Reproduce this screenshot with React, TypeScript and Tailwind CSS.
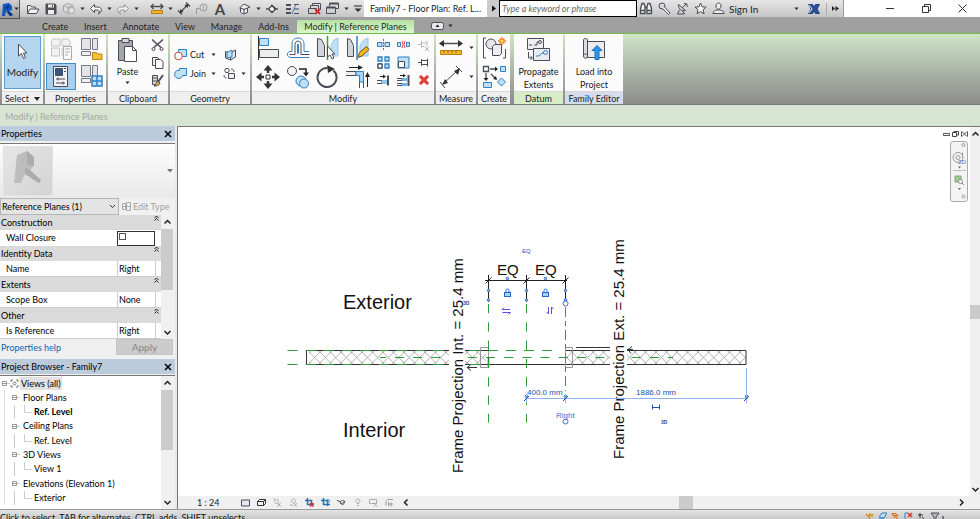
import React from "react";

type Kids = { children?: React.ReactNode };

function Svg({ w, h, children }: Kids & { w: number; h: number }) {
  return (
    <svg width={w} height={h} viewBox={`0 0 ${w} ${h}`} fill="none" stroke="#4a4d57" strokeWidth="1" className="shrink-0" aria-hidden="true">
      {children}
    </svg>
  );
}

function Caret() {
  return (
    <Svg w={5} h={4}>
      <path d="M0.5 0.5h4L2.5 3z" fill="#222" stroke="none" />
    </Svg>
  );
}

function Chevron({ dir }: { dir: "up" | "down" | "left" | "right" }) {
  const d = {
    up: "M1.5 5.5L4.5 2.5l3 3",
    down: "M1.5 3L4.5 6l3-3",
    left: "M5.5 1.5L2.5 4.5l3 3",
    right: "M3 1.5l3 3-3 3",
  }[dir];
  return (
    <Svg w={9} h={9}>
      <path d={d} stroke="#222" strokeWidth="1.5" />
    </Svg>
  );
}

function Cell({ label, children }: Kids & { label: string }) {
  return (
    <button aria-label={label} className="flex h-4 w-[18px] shrink-0 items-center justify-center">
      {children}
    </button>
  );
}

function ArrowCell({ label }: { label: string }) {
  return (
    <button aria-label={label} className="flex h-4 w-[9px] shrink-0 items-center justify-center">
      <Caret />
    </button>
  );
}

function QuickAccess() {
  return (
    <div className="flex h-[17px] shrink-0 items-center pl-1">
      <Cell label="Open">
        <Svg w={14} h={12}>
          <path d="M1.5 10.5v-8h3l1 1.500h4v2M1.500 10.500l2.500-4.500h9l-2.500 4.500z" fill="#f3f3f3" />
        </Svg>
      </Cell>
      <Cell label="Save">
        <Svg w={12} h={12}>
          <path d="M1 1h9l1 1v9H1z" fill="#4a4d57" />
          <path d="M3 1.500h6v3H3zM3 7h6v4H3z" fill="#eee" stroke="none" />
          <path d="M7.500 2v2" />
        </Svg>
      </Cell>
      <Cell label="Synchronize">
        <Svg w={14} h={13}>
          <path d="M1.500 3.500L6 1.500l5 2v5l-5 3-4.500-2.500zM1.500 3.500L6 5.500l5-2M6 5.500v6" stroke="#a5a5a5" fill="#ddd" />
          <circle cx="9.500" cy="8.500" r="3" stroke="#a5a5a5" fill="#e3e3e3" />
        </Svg>
      </Cell>
      <ArrowCell label="Synchronize options" />
      <Cell label="Undo">
        <Svg w={14} h={12}>
          <path d="M1.500 5.500l4-4v2.500h3c5 0 5 5 1 7 1.500-2.500 1-4-1-4h-3v2.500z" fill="#fafafa" />
        </Svg>
      </Cell>
      <ArrowCell label="Undo list" />
      <Cell label="Redo">
        <Svg w={14} h={12}>
          <path d="M12.500 5.500l-4-4v2.500h-3c-5 0-5 5-1 7-1.500-2.500-1-4 1-4h3v2.500z" fill="#eee" stroke="#999" />
        </Svg>
      </Cell>
      <ArrowCell label="Redo list" />
      <div className="w-[7px]" />
      <Cell label="Measure between references">
        <Svg w={14} h={12}>
          <path d="M1 3.500h12M3.500 1L1 3.500 3.500 6M10.500 1L13 3.500 10.500 6" strokeWidth="1.300" />
          <path d="M1.500 7.500h11v3h-11z" fill="#eeb52b" stroke="#b77f10" />
        </Svg>
      </Cell>
      <ArrowCell label="Measure options" />
      <Cell label="Aligned dimension">
        <Svg w={14} h={13}>
          <path d="M3 10.500l8-8M1 8.500l4 4M9 .5l4 4" strokeWidth="1.200" />
          <path d="M2.500 11l1-4 3 3zM11.500 2l-1 4-3-3z" fill="#333" stroke="none" />
        </Svg>
      </Cell>
      <Cell label="Tag by category">
        <Svg w={14} h={12}>
          <path d="M1.500 11V5.500H5" stroke="#999" />
          <circle cx="8.500" cy="4.500" r="3.500" stroke="#999" />
          <path d="M8.500 2.500v4" stroke="#999" />
        </Svg>
      </Cell>
      <Cell label="Text">
        <span className="text-[15px] leading-4 font-bold text-[#444]">A</span>
      </Cell>
      <div className="w-[7px]" />
      <Cell label="Default 3D view">
        <Svg w={14} h={13}>
          <path d="M1.500 6L6 2l6 3-2.500 1v4.500L5 12l-2.500-2V6zM2.500 6L6 7.500l3.500-1.500M6 7.500V12" fill="#eee" />
        </Svg>
      </Cell>
      <ArrowCell label="3D view options" />
      <Cell label="Section">
        <Svg w={12} h={12}>
          <path d="M0 6h2.500M9.500 6H12M2.500 6L6 2.500 9.500 6 6 9.500z" strokeWidth="1.500" fill="#fff" />
          <path d="M5 1l6 5H8z" fill="#444" stroke="none" />
        </Svg>
      </Cell>
      <div className="w-[2px]" />
      <Cell label="Thin lines">
        <Svg w={13} h={12}>
          <path d="M0 2h5M0 6h5M0 10h5" strokeWidth="2" />
          <path d="M6 11l4-10" stroke="#3d8cd0" />
          <path d="M8 1.500h5M8 6h5M8 10.500h5" />
        </Svg>
      </Cell>
      <div className="w-[5px]" />
      <Cell label="Close hidden windows">
        <Svg w={14} h={13}>
          <path d="M4.500 3.500v-2h8v6h-2M2.500 6V3.500h8V8M.5 6.500h8v5h-8z" />
          <path d="M7 7l5 5M12 7l-5 5" stroke="#d52b2b" strokeWidth="1.800" />
        </Svg>
      </Cell>
      <Cell label="Switch windows">
        <Svg w={14} h={13}>
          <path d="M3.500 4.500v-3h9v5h-3M.5 5.500h9v6h-9z" />
          <path d="M.5 5.500h9M3.500 1.500h9" strokeWidth="2" />
        </Svg>
      </Cell>
      <ArrowCell label="Window list" />
      <button aria-label="Customize toolbar" className="flex h-4 w-[13px] items-center justify-center">
        <Svg w={8} h={8}>
          <path d="M0 1h8" stroke="#222" />
          <path d="M0.500 3.500h7L4 7z" fill="#333" stroke="none" />
        </Svg>
      </button>
    </div>
  );
}

function TitleBar() {
  return (
    <header className="relative z-10 flex h-[17px] shrink-0 items-start bg-linear-to-b from-[#e6e6e6] to-[#c6c6c6]">
      <button aria-label="Application menu" className="flex h-[19px] w-5 shrink-0 items-center border-r border-b border-[#555] bg-linear-to-b from-[#d0d0d0] to-[#999] pl-px">
        <Svg w={13} h={15}>
          <path d="M2 2l6-1 3 3v4L8 9l4 4-3 1-4-5-1 5H1z" fill="#1257c0" stroke="none" />
          <path d="M5 4l3-1v3L5 7zM8 9l4 4-3 1-3-4z" fill="#06348a" stroke="none" />
        </Svg>
        <Caret />
      </button>
      <QuickAccess />
      <h1 className="h-[17px] min-w-[123px] grow bg-white text-center text-[9px] leading-[17px] whitespace-nowrap text-[#222]">
        Family7 - Floor Plan: Ref. L...
      </h1>
      <button aria-label="Show search" className="flex h-[17px] w-3 shrink-0 items-center justify-center bg-[#ccc]">
        <Svg w={5} h={7}>
          <path d="M1 0.500v6l4-3z" fill="#111" stroke="none" />
        </Svg>
      </button>
      <input
        aria-label="Search help"
        placeholder="Type a keyword or phrase"
        className="h-[17px] w-[138px] shrink-0 border border-black bg-white px-[2px] text-[9px] italic placeholder:text-[#666]"
      />
      <div className="flex h-[17px] w-[207px] shrink-0 items-center border-r border-[#999]">
        <Cell label="Search">
          <Svg w={14} h={13}>
            <path d="M1.500 11.500v-5l1.500-5h2l1 3v7zM12.500 11.500v-5l-1.500-5H9l-1 3v7zM6 5.500h2M1.500 8.500H6M8 8.500h4.500" strokeWidth="1.300" fill="#eee" />
          </Svg>
        </Cell>
        <Cell label="Subscription">
          <Svg w={13} h={13}>
            <circle cx="4" cy="4" r="3" />
            <path d="M6 4.500l6 6.500-1.500 1.500L4.500 6.500" fill="#eee" />
          </Svg>
        </Cell>
        <Cell label="Communication center">
          <Svg w={13} h={13}>
            <path d="M2.500 2.500c0 5 3 7 7 6zM6 6l4-4M3.500 8l-2 4h7l-2-3M8 1.500l3 .5v3" />
          </Svg>
        </Cell>
        <Cell label="Favorites">
          <Svg w={13} h={13}>
            <path d="M6.500 1l1.600 3.800 4 .3-3 2.700 1 4-3.600-2.200L3 11.800l1-4-3-2.700 4-.3z" fill="#f3f3f3" />
          </Svg>
        </Cell>
        <Cell label="Account">
          <Svg w={13} h={13}>
            <path d="M4 4c0-4 5-4 5 0S4 8.500 4 4zM1 11.500c0-3 2-2.500 4-3.500h3c2 1 4 .5 4 3.500z" fill="#eee" />
          </Svg>
        </Cell>
        <button className="w-[65px] pl-[2px] text-left text-[10px] leading-4 whitespace-nowrap text-[#222]">Sign In</button>
        <ArrowCell label="Account options" />
        <div className="w-1" />
        <Cell label="Exchange apps">
          <Svg w={14} h={12}>
            <path d="M1.500 1.500h4L7 4l1.500-2.500h4L10 6l2.500 4.500h-4L7 8l-1.500 2.500h-4L4 6z" fill="#2c4f9f" stroke="#25437f" />
            <path d="M2 2l3 4-3 4" stroke="#e8eefc" />
          </Svg>
        </Cell>
        <div className="ml-[3px] h-3 w-px bg-[#aaa]" />
        <button aria-label="More" className="flex h-4 grow items-center justify-center">
          <Svg w={7} h={5}>
            <path d="M0 0l3 2.500L0 5zM3.500 0L7 2.500 3.500 5z" fill="#222" stroke="none" />
          </Svg>
        </button>
      </div>
      <div className="flex h-[17px] w-[136px] shrink-0 items-center justify-end bg-white">
        <button aria-label="Minimize" className="flex w-9 justify-center">
          <Svg w={8} h={9}>
            <path d="M0 4.500h8" stroke="#333" />
          </Svg>
        </button>
        <button aria-label="Restore" className="flex w-9 justify-center">
          <Svg w={9} h={9}>
            <path d="M.5 2.500h6v6h-6zM2.500 2.500v-2h6v6h-2" stroke="#333" />
          </Svg>
        </button>
        <button aria-label="Close" className="flex w-9 justify-center">
          <Svg w={9} h={9}>
            <path d="M.5.5l8 8M8.500.5l-8 8" stroke="#333" />
          </Svg>
        </button>
      </div>
    </header>
  );
}

function Tabs() {
  const tabs = ["Create", "Insert", "Annotate", "View", "Manage", "Add-Ins"];
  return (
    <nav className="flex h-4 shrink-0 items-end bg-[#a0a0a0] pl-[42px] text-[9px] leading-[13px] whitespace-nowrap text-[#222]">
      <div className="flex w-[247px] shrink-0 justify-between">
        {tabs.map((t) => (
          <button key={t}>{t}</button>
        ))}
      </div>
      <button className="ml-2 w-[117px] shrink-0 bg-linear-to-b from-[#b5e3a3] to-[#dcf3cf] text-center text-[#1d2b1d]">
        Modify | Reference Planes
      </button>
      <button aria-label="Minimize ribbon" className="ml-[17px] flex h-[14px] items-center gap-1">
        <Svg w={13} h={8}>
          <rect x=".5" y=".5" width="12" height="7" rx="2" fill="#e8e8e8" />
          <path d="M4.500 5L6.500 2.500 8.500 5z" fill="#222" stroke="none" />
        </Svg>
        <Caret />
      </button>
    </nav>
  );
}

function Panel({ title, width, tone, children }: Kids & { title: React.ReactNode; width: string; tone?: string }) {
  return (
    <section className={`flex shrink-0 flex-col ${width}`}>
      <div className="flex grow items-stretch bg-[#fbfbfb]">{children}</div>
      <h2 className={`h-[13px] border-t border-[#d8d8d8] text-center text-[9px] leading-[13px] whitespace-nowrap text-[#222] ${tone ?? "bg-[#efefef]"}`}>
        {title}
      </h2>
    </section>
  );
}

function Tool({ label, className, children }: Kids & { label: string; className?: string }) {
  return (
    <button aria-label={label} className={`flex items-center justify-center ${className ?? ""}`}>
      {children}
    </button>
  );
}

const blue = "#2f7fc4";
const pale = "#bfe0f5";

function TypeWindows() {
  return (
    <>
      <path d="M2.500 1.500h9v11h-9zM13.500 1.500h5v11h-5z" stroke="#777a84" fill="#e4e4e8" />
      <path d="M2.500 14.500h9v4h-9z" stroke="#777a84" fill="#f0f0f2" />
    </>
  );
}

function Ribbon() {
  return (
    <div className="flex h-[72px] shrink-0 gap-[2px] border-t border-b border-t-[#6cc04a] border-b-[#7a7a7a] bg-linear-to-b from-[#cfe5c6] to-[#8c8c8c] pl-[2px]">
      <Panel
        width="w-[41px]"
        title={
          <span className="flex items-center justify-center gap-[5px]">
            Select
            <Svg w={6} h={4}>
              <path d="M0 0h6L3 4z" fill="#222" stroke="none" />
            </Svg>
          </span>
        }
      >
        <button className="m-[2px] flex grow flex-col items-center border border-[#5a9bd0] bg-[#b5d5ef] pt-[6px] text-[10px] leading-3 text-[#222]">
          <Svg w={11} h={17}>
            <path d="M1.500 1v12l3-2.500 2 5 2-1-2-4.500h3.500z" fill="#fff" />
          </Svg>
          <span className="mt-[6px]">Modify</span>
        </button>
      </Panel>
      <Panel width="w-[61px]" title="Properties">
        <div className="grid grow grid-cols-2 grid-rows-2 py-px pl-px">
          <Tool label="Type properties">
            <Svg w={24} h={24}>
              <path d="M4 2h7v7H2.500V4zM13 2h6l2 2v5h-8zM2.500 11h8v8h-8zM13 11v8" stroke="#c4c4c4" fill="#f2f2f2" />
              <path d="M14.500 9.500h8v13h-8z" fill="#fafafa" stroke="#aaa" />
              <path d="M16 12h5M16 15h5M16 18h3" stroke="#aaa" />
            </Svg>
          </Tool>
          <Tool label="Family category and parameters">
            <Svg w={24} h={24}>
              <TypeWindows />
              <path d="M13.500 22.500v-7h4l1 1.500h4.500v5.500z" fill="#f6c13a" stroke="#b98616" />
            </Svg>
          </Tool>
          <Tool label="Properties palette" className="border border-[#3d8cc7] bg-[#a9cfec]">
            <Svg w={18} h={23}>
              <path d="M1.500 1.500h14v20h-14z" fill="#f1f3f6" />
              <path d="M3.500 3.500h7v7h-7z" fill="#335a87" />
              <path d="M12 3.500h2M12 6.500h2M4 14h9M4 18h9M6 12.500v3M11 16.500v3" />
            </Svg>
          </Tool>
          <Tool label="Family types">
            <Svg w={24} h={24}>
              <TypeWindows />
              <path d="M13 12h10v10H13zM18 12v10M13 17h10" fill={pale} stroke={blue} strokeWidth="1.500" />
            </Svg>
          </Tool>
        </div>
      </Panel>
      <Panel width="w-[60px]" title="Clipboard">
        <button className="flex w-[39px] flex-col items-center pt-[3px] text-[9px] leading-3 text-[#222]">
          <Svg w={21} h={26}>
            <path d="M1.500 3.500h14v20h-14z" fill="#a4a6ad" />
            <path d="M5 1.500h7v4H5z" fill="#d8d8dc" />
            <path d="M7.500 9.500h8l4 4v11h-12z" fill="#fff" />
            <path d="M15.500 9.500v4h4" />
          </Svg>
          <span className="mt-[3px] mb-[3px]">Paste</span>
          <Caret />
        </button>
        <div className="grid grow grid-rows-3 py-[2px]">
          <Tool label="Cut to clipboard">
            <Svg w={13} h={13}>
              <path d="M1 1.500l9 8M12 1.500l-9 8" strokeWidth="1.600" />
              <circle cx="2.500" cy="11" r="1.500" />
              <circle cx="10.500" cy="11" r="1.500" />
            </Svg>
          </Tool>
          <Tool label="Copy to clipboard">
            <Svg w={13} h={13}>
              <path d="M1.500 1.500h5l2 2v6h-7z" fill="#eee" />
              <path d="M4.500 3.500h5l2.500 2v7H4.500z" fill="#fff" />
            </Svg>
          </Tool>
          <Tool label="Match type">
            <Svg w={13} h={13}>
              <path d="M1.500 1.500h5v9h-5zM2 4h4M2 7h4" fill="#ddd" />
              <path d="M12 1L7 8" strokeWidth="2" />
              <path d="M7 7l2 2c-1 3-4 3-6 3 2-1 2-4 4-5z" fill="#e5a243" />
            </Svg>
          </Tool>
        </div>
      </Panel>
      <Panel width="w-[80px]" title="Geometry">
        <div className="grid grow grid-cols-[46px_34px] content-center gap-y-[3px] pt-[3px] text-[9px] leading-4 text-[#222]">
          <button className="flex items-center justify-between pl-1 whitespace-nowrap">
            <span className="flex items-center gap-[3px]">
              <Svg w={13} h={13}>
                <path d="M4.500 1.500h8v7h-8z" fill={pale} stroke={blue} />
                <circle cx="4.500" cy="8" r="3.800" fill="#fff" stroke="#d04040" />
              </Svg>
              Cut
            </span>
            <Caret />
          </button>
          <Tool label="Cope" className="pr-[6px]">
            <Svg w={13} h={13}>
              <path d="M1.500 3.500l5 1.500v7l-5-2zM6.500 5l5-3v7l-5 3z" fill="#e8e8ec" />
              <path d="M3 4.500l5-2.500v7L3 10z" fill={pale} stroke={blue} />
            </Svg>
          </Tool>
          <button className="flex items-center justify-between pl-1 whitespace-nowrap">
            <span className="flex items-center gap-[3px]">
              <Svg w={13} h={13}>
                <path d="M5.500 1.500h7v7H8.500a4 4 0 1 1-3-5z" fill={pale} stroke={blue} />
              </Svg>
              Join
            </span>
            <Caret />
          </button>
          <Tool label="Split face" className="gap-[5px] pl-[2px]">
            <Svg w={13} h={13}>
              <circle cx="4" cy="3.500" r="2.200" />
              <path d="M5.500 6.500h6v5h-6zM1 8c0 2 1 3 2.500 3M8 2c2 0 3 1 3 3" fill="#eee" />
            </Svg>
            <Caret />
          </Tool>
        </div>
      </Panel>
      <Panel width="w-[182px]" title="Modify">
        <div className="grid grid-cols-[repeat(4,30px)] grid-rows-2 pl-px">
          <Tool label="Align">
            <Svg w={24} h={24}>
              <path d="M2.500 0v24" stroke="#333" />
              <path d="M3.500 2.500h9v7h-9z" fill={pale} stroke={blue} />
              <path d="M3.500 13.500h19v8h-19z" fill="#eee" />
            </Svg>
          </Tool>
          <Tool label="Offset">
            <Svg w={24} h={24}>
              <path d="M6 15.500V8c0-8 12-8 12 0v7.500h5M6 15.500c-6-1-6 6-1 6h18" fill="#fff" stroke={blue} />
              <path d="M3.500 18.500H9V8.500c0-4.500 6-4.500 6 0v10h8.500" />
              <path d="M11.500 17.500v-9c0-1 1-1 1 0v9" stroke={blue} />
            </Svg>
          </Tool>
          <Tool label="Mirror pick axis">
            <Svg w={24} h={24}>
              <path d="M1.500 2.500l4 1 3 6v11h-7z" fill="#d4d5da" />
              <path d="M15 9l3-5 4-2v18h-7z" fill={pale} stroke="#9cc5e2" />
              <path d="M11.500 0v24" stroke="#3aa03a" strokeWidth="1.500" />
              <path d="M11.500 10v11l2.500-2 2 4 2-1-2-4h3z" fill="#fff" />
            </Svg>
          </Tool>
          <Tool label="Mirror draw axis">
            <Svg w={24} h={24}>
              <path d="M1.500 2.500l3 1 3 6v11h-6z" fill="#d4d5da" />
              <path d="M14 9l4-5 4-2v18h-8z" fill={pale} stroke="#9cc5e2" />
              <path d="M11 0v24" stroke={blue} strokeWidth="1.500" />
              <path d="M12 21.500l1.500-5 7-6 2.500 3-7 6.500z" fill="#f3b51f" stroke="#70500f" />
            </Svg>
          </Tool>
          <Tool label="Move">
            <Svg w={24} h={24}>
              <path d="M12 4v4M12 16v4M4 12h4M16 12h4" stroke="#333" strokeWidth="2.500" />
              <path d="M12 0l4.500 5.500h-9zM12 24l4.500-5.500h-9zM0 12l5.500-4.500v9zM24 12l-5.500-4.500v9z" fill="#333" stroke="none" />
              <path d="M10 10h4v4h-4z" fill="#fff" stroke="#333" />
            </Svg>
          </Tool>
          <Tool label="Copy">
            <Svg w={24} h={24}>
              <circle cx="6" cy="6" r="4.500" fill="#f2f2f4" />
              <path d="M13 4h7v5" strokeWidth="1.500" stroke="#222" />
              <path d="M17 7.500h6l-3 4z" fill="#222" stroke="none" />
              <circle cx="15" cy="16" r="5" fill={pale} stroke={blue} />
              <circle cx="18" cy="18.500" r="4.500" fill={pale} stroke={blue} />
            </Svg>
          </Tool>
          <Tool label="Rotate">
            <Svg w={24} h={24}>
              <path d="M17.500 5.500a9.500 9.500 0 1 1-6-2.500" strokeWidth="2" />
              <path d="M11 0l8 4-7 4z" fill="#333" stroke="none" />
            </Svg>
          </Tool>
          <Tool label="Trim to corner">
            <Svg w={24} h={24}>
              <path d="M0 6.500h10v4H0M13.500 17v6M17.500 17v6" fill="#eee" />
              <path d="M10 6.500h7.500V17h-4v-6.500H10z" fill="#a6d4f5" stroke={blue} />
              <path d="M3 2.500h10M21.500 11v11" stroke="#222" />
              <path d="M12 0l5 2.500-5 2.500zM19 12l2.500-5 2.500 5z" fill="#222" stroke="none" />
            </Svg>
          </Tool>
        </div>
        <div className="grid grow grid-cols-3 grid-rows-3 py-[2px]">
          <Tool label="Split element">
            <Svg w={13} h={11}>
              <path d="M.5 3.500H5v4H.5zM8 3.500h4.500v4H8z" fill={pale} stroke={blue} />
              <path d="M6.500 0v11" stroke="#d44" strokeDasharray="2 1" />
            </Svg>
          </Tool>
          <Tool label="Split with gap">
            <Svg w={13} h={11}>
              <path d="M.5 3.500h3v4h-3zM9.500 3.500h3v4h-3z" fill={pale} stroke={blue} />
              <path d="M5 2l1 3.500L5 9M8 2L7 5.500 8 9" stroke="#d44" />
            </Svg>
          </Tool>
          <Tool label="Unpin">
            <Svg w={12} h={12}>
              <path d="M0 5.500h3M3.500 2v7M3.500 4h5M3.500 7.500h3M9 1.500v6M7 8l4 4M11 8l-4 4" stroke="#bbb" />
            </Svg>
          </Tool>
          <Tool label="Array">
            <Svg w={13} h={13}>
              <path d="M1 1h4v4H1zM8 1h4v4H8zM1 8h4v4H1zM8 8h4v4H8z" fill={pale} stroke={blue} strokeWidth="1.300" />
              <path d="M1 8h4v4H1z" stroke="#333" fill="#fff" />
            </Svg>
          </Tool>
          <Tool label="Scale">
            <Svg w={13} h={13}>
              <path d="M1 1h11v11H1z" fill={pale} stroke={blue} />
              <path d="M1.500 5.500h6v6h-6z" fill="#fff" />
            </Svg>
          </Tool>
          <Tool label="Pin">
            <Svg w={12} h={11}>
              <path d="M0 5.500h3M3.500 2v7M3.500 3.500h6v4h-6M9.500 1.500v8" />
            </Svg>
          </Tool>
          <Tool label="Trim single element">
            <Svg w={13} h={13}>
              <path d="M11 1.500v10" strokeWidth="2" />
              <path d="M3 2.500h4" stroke="#222" />
              <path d="M6 .5l3 2-3 2z" fill="#222" stroke="none" />
              <path d="M0 6.500h5v3H0" fill="#fff" />
              <path d="M5 6h5v4H5z" fill="#8cc6f2" stroke="none" />
            </Svg>
          </Tool>
          <Tool label="Trim multiple elements">
            <Svg w={13} h={13}>
              <path d="M11.500 1v11" strokeWidth="2" />
              <path d="M3 1.500h4" stroke="#222" />
              <path d="M6 0l3 1.500-3 2z" fill="#222" stroke="none" />
              <path d="M0 4.500h5v2H0M0 9.500h5v2H0" fill="#fff" />
              <path d="M5 4h5v3H5zM5 9h5v3H5z" fill="#6fb5ea" stroke="none" />
            </Svg>
          </Tool>
          <Tool label="Delete">
            <Svg w={12} h={12}>
              <path d="M2 2l8 8M10 2l-8 8" stroke="#c42020" strokeWidth="3" />
              <path d="M2 2l8 8M10 2l-8 8" stroke="#ee4a3c" strokeWidth="1.500" />
            </Svg>
          </Tool>
        </div>
      </Panel>
      <Panel width="w-[40px]" title="Measure">
        <div className="grid grow grid-cols-[30px_10px] grid-rows-2">
          <Tool label="Measure">
            <Svg w={24} h={18}>
              <path d="M1 4.500h22" strokeWidth="1.500" />
              <path d="M0 4.500L5 1v7zM24 4.500L19 1v7z" fill="#333" stroke="none" />
              <path d="M1.500 11.500h21v4h-21z" fill="#f1b82d" stroke="#b77f10" />
              <path d="M5 11v3M9 11v3M13 11v3M17 11v3" stroke="#a06c08" />
            </Svg>
          </Tool>
          <button aria-label="Measure list" className="flex items-center justify-center">
            <Caret />
          </button>
          <Tool label="Dimension">
            <Svg w={24} h={24}>
              <path d="M4 19L20 4M1 17l5 6M17 1l6 6" />
              <path d="M3 20l3-6 3 4zM21 3l-6 3 4 4z" fill="#333" stroke="none" />
            </Svg>
          </Tool>
          <button aria-label="Dimension list" className="flex items-center justify-center">
            <Caret />
          </button>
        </div>
      </Panel>
      <Panel width="w-[32px]" title="Create">
        <div className="grid grow grid-rows-2">
          <Tool label="Create group">
            <Svg w={25} h={24}>
              <path d="M4 2H1.500v20H4M21 22h2.500V13" />
              <circle cx="9" cy="8" r="5" fill="#e6e6ea" />
              <path d="M10.500 10.500l2-2h7v9l-2 2h-7z" fill="#ececf0" />
              <path d="M20 1v8M16 5h8M17.500 2.500l5 5M22.500 2.500l-5 5" stroke="#f07a16" strokeWidth="1.300" />
              <circle cx="20" cy="5" r="1.500" fill="#ffe56b" stroke="none" />
            </Svg>
          </Tool>
          <Tool label="Create similar">
            <Svg w={25} h={24}>
              <path d="M1.500 1.500h5v5h-5zM4 8v6M8 4h6M9 9l4 4" strokeWidth="1.300" />
              <path d="M16 4l-3-2.500v5zM4 16l-2.500-3h5zM15 15l-4-1 3-3z" fill="#222" stroke="none" />
              <path d="M18.500 1.500h5v5h-5zM1.500 17.500h8v5h-8zM19.500 13l4 4-4 4-4-4z" fill={pale} stroke={blue} />
            </Svg>
          </Tool>
        </div>
      </Panel>
      <div className="w-0" />
      <Panel width="w-[49px]" title="Datum" tone="bg-[#d6edc8]">
        <button className="flex grow flex-col items-center pt-[3px] text-[9px] leading-[13px] text-[#222]">
          <Svg w={25} h={24}>
            <path d="M1.500 1.500h16v11h-16z" fill="#eee" />
            <path d="M3 8h3M8 8h3V5h2" />
            <circle cx="14" cy="5" r="1.500" />
            <path d="M2.500 15v6h3M4.500 19l2 2-2 2" />
            <path d="M7.500 11.500h16v12h-16z" fill="#e7edf3" />
            <path d="M10 19h3l3-3h2" stroke={blue} />
            <circle cx="19.500" cy="15.500" r="2" stroke={blue} />
          </Svg>
          <span className="mt-1 w-[49px]">Propagate Extents</span>
        </button>
      </Panel>
      <Panel width="w-[58px]" title="Family Editor" tone="bg-[#d5dcee]">
        <button className="flex grow flex-col items-center pt-[3px] text-[9px] leading-[13px] text-[#222]">
          <Svg w={24} h={24}>
            <path d="M5.500 4.500h17v16h-17z" fill="#ececee" />
            <path d="M1.500 3c0-2 4-2 4 0v16c0 3-4 3-4 0zM1.500 18c2-2 4-1 4 1" fill="#ddd" />
            <path d="M10 13.500l5-5 5 5h-3v9h-4v-9z" fill="#2c94ee" stroke="#1c6fba" />
          </Svg>
          <span className="mt-1 w-[46px]">Load into Project</span>
        </button>
      </Panel>
    </div>
  );
}

function PaneHeader({ title }: { title: string }) {
  return (
    <div className="flex h-[15px] shrink-0 items-center justify-between bg-[#bccbdb] px-px text-[9px] text-black">
      <h2>{title}</h2>
      <button aria-label={`Close ${title}`} className="flex pr-[2px]">
        <Svg w={8} h={8}>
          <path d="M1 1l6 6M7 1L1 7" stroke="#000" strokeWidth="1.500" />
        </Svg>
      </button>
    </div>
  );
}

function GroupRow({ name }: { name: string }) {
  return (
    <tr className="h-[15px] bg-[#dadada]">
      <th colSpan={3} className="p-0 text-left font-normal">
        <div className="flex h-[15px] items-start justify-between pr-[2px] pl-px">
          <span className="leading-4">{name}</span>
          <Svg w={5} h={6}>
            <path d="M.5 3l2-2 2 2M.5 5.500l2-2 2 2" stroke="#222" />
          </Svg>
        </div>
      </th>
    </tr>
  );
}

function ValueRow({ name, value }: { name: string; value: string }) {
  return (
    <tr className="h-4 bg-white">
      <td className="border-b border-[#ccc] p-0 pl-[6px]">{name}</td>
      <td className="w-[38px] border-b border-l border-[#ccc] p-0 pl-px">{value}</td>
      <td className="w-[6px] border-b border-l border-[#ccc] p-0" />
    </tr>
  );
}

function Scroll({ thumb }: { thumb: string }) {
  return (
    <div className="flex w-3 shrink-0 flex-col items-center justify-between bg-[#f0f0f0]">
      <button aria-label="Scroll up" className="flex h-[14px] items-center">
        <Chevron dir="up" />
      </button>
      <div className={`w-3 bg-[#cbcbcb] ${thumb}`} />
      <div className="grow" />
      <button aria-label="Scroll down" className="flex h-[14px] items-center">
        <Chevron dir="down" />
      </button>
    </div>
  );
}

function PropertiesPane() {
  return (
    <section className="flex flex-col bg-[#f0f0f0] text-[9px] text-black">
      <PaneHeader title="Properties" />
      <div className="mt-[2px] flex h-[55px] items-center justify-between border-t border-[#777] bg-linear-to-b from-[#fdfdfd] to-[#e9e9e9] pr-[2px] pl-[3px]">
        <div className="flex h-[50px] w-[50px] items-center justify-center border border-[#e2e2e2] bg-linear-to-br from-[#e6e6e6] to-[#d3d3d3]">
          <Svg w={28} h={42}>
            <path d="M3 5l10-4 7 6v9l-4 4 11 10-2 3-14-9-4 9H0z" fill="#bdbdbd" stroke="none" />
            <path d="M13 1l7 6v9l-7-2zM11 18l5 2 11 10-2 3-14-9z" fill="#acacac" stroke="none" />
          </Svg>
        </div>
        <Svg w={6} h={4}>
          <path d="M0 0h6L3 3.500z" fill="#777" stroke="none" />
        </Svg>
      </div>
      <div className="flex h-[17px] items-center">
        <div className="relative h-[17px] w-[119px]">
          <select aria-label="Element filter" className="h-[17px] w-full appearance-none border border-[#b5b5b5] bg-[#e4e4e4] pl-px">
            <option>Reference Planes (1)</option>
          </select>
          <span className="pointer-events-none absolute top-[5px] right-[3px]">
            <Svg w={7} h={7}>
              <path d="M1 2l2.500 2.500L6 2" stroke="#333" />
            </Svg>
          </span>
        </div>
        <button disabled className="flex grow items-center gap-[2px] pl-[3px] text-[9px] whitespace-nowrap text-[#a0a0a0]">
          <Svg w={9} h={9}>
            <path d="M.5 1.500h3v6h-3zM4.500.5h4v8h-4zM4.500 4.500h4M.5 4.500h3" stroke="#a8a8a8" />
          </Svg>
          Edit Type
        </button>
      </div>
      <div className="flex">
        <table className="grow table-fixed border-separate border-spacing-0 leading-[14px]">
          <colgroup>
            <col />
            <col className="w-[38px]" />
            <col className="w-[6px]" />
          </colgroup>
          <tbody>
            <GroupRow name="Construction" />
            <tr className="h-4 bg-white">
              <td className="p-0 pl-[6px]">
                <label htmlFor="closure">Wall Closure</label>
              </td>
              <td className="p-0">
                <div className="flex h-[15px] items-start border border-[#333] pt-px pl-px">
                  <input id="closure" type="checkbox" className="h-[7px] w-[7px] appearance-none border border-[#555] bg-white" />
                </div>
              </td>
              <td className="p-0" />
            </tr>
            <GroupRow name="Identity Data" />
            <ValueRow name="Name" value="Right" />
            <GroupRow name="Extents" />
            <ValueRow name="Scope Box" value="None" />
            <GroupRow name="Other" />
            <ValueRow name="Is Reference" value="Right" />
          </tbody>
        </table>
        <Scroll thumb="h-[61px]" />
        <div className="w-[2px]" />
      </div>
      <div className="flex h-[17px] items-start justify-between pr-[2px] pl-px">
        <a href="#help" className="leading-[17px] text-[#0a5fb4]">
          Properties help
        </a>
        <button disabled className="h-4 w-[57px] border border-[#c4c4c4] bg-[#cccccc] text-[10px] leading-[14px] text-[#868686]">
          Apply
        </button>
      </div>
    </section>
  );
}

function TreeMark() {
  return (
    <Svg w={9} h={7}>
      <path d="M1.500 1.500h4v4h-4zM2 3.500h3" stroke="#999" fill="#fff" />
      <path d="M6 3.500h3" stroke="#ccc" />
    </Svg>
  );
}

function ProjectBrowser() {
  const groups: [string, string, boolean][] = [
    ["Floor Plans", "Ref. Level", true],
    ["Ceiling Plans", "Ref. Level", false],
    ["3D Views", "View 1", false],
    ["Elevations (Elevation 1)", "Exterior", false],
  ];
  return (
    <section className="flex min-h-0 grow flex-col bg-[#f0f0f0] text-[9px] text-black">
      <PaneHeader title="Project Browser - Family7" />
      <div className="mt-px flex min-h-0 grow border-t border-[#777] bg-white">
        <ul className="flex min-w-0 grow flex-col overflow-hidden pb-1 whitespace-nowrap">
          <li className="flex min-h-0 grow flex-col">
            <div className="flex flex-1 items-center pl-px">
              <TreeMark />
              <Svg w={9} h={9}>
                <path d="M1 3V1h2M6 1h2v2M8 6v2H6M3 8H1V6" stroke="#777" />
                <circle cx="4.500" cy="4.500" r="1.500" stroke="#777" />
              </Svg>
              <span className="ml-px bg-[#e2e2e2] px-px leading-[13px]">Views (all)</span>
            </div>
            <ul className="ml-1 flex flex-[8] flex-col border-l border-[#ddd] pl-[6px]">
              {groups.map(([name, child, bold]) => (
                <li key={name} className="flex flex-1 flex-col">
                  <div className="flex flex-1 items-center">
                    <TreeMark />
                    <span className="ml-[3px]">{name}</span>
                  </div>
                  <div className="flex flex-1 items-center pl-[3px]">
                    <Svg w={19} h={14}>
                      <path d="M.5 0v14M10.500 0v7.500h8" stroke="#ccc" />
                    </Svg>
                    <span className={bold ? "ml-px font-bold" : "ml-px"}>{child}</span>
                  </div>
                </li>
              ))}
            </ul>
          </li>
        </ul>
        <Scroll thumb="h-[60px]" />
        <div className="w-[2px] bg-[#f0f0f0]" />
      </div>
    </section>
  );
}

function Lock({ x }: { x: number }) {
  return (
    <g stroke="#2268c8">
      <path d={`M${x - 1} 292v-1.500a1.500 1.500 0 0 1 3 0v1.500`} />
      <rect x={x - 2.5} y="292.500" width="6" height="4" fill="#a9d3f5" />
    </g>
  );
}

function PlanDrawing() {
  const green = "#2e9a3a";
  const link = "#3f6fd8";
  const ink = "#1c4fae";
  return (
    <svg width="792" height="368" viewBox="178 127 792 368" className="block shrink-0" fill="none" fontFamily="'Liberation Sans', Arial, sans-serif" role="img" aria-label="Floor plan of the reference level">
      <defs>
        <pattern id="hatch" x="309.500" y="352.250" width="10.500" height="10.500" patternUnits="userSpaceOnUse">
          <path d="M0 0L10.500 10.500M10.500 0L0 10.500" stroke="#999" strokeWidth=".8" />
        </pattern>
      </defs>
      <rect x="309" y="351" width="177" height="13" fill="url(#hatch)" />
      <rect x="567" y="351" width="179" height="13" fill="url(#hatch)" />
      <g stroke="#333">
        <path d="M307 350.500H488M307 364.500H565M565 350.500h181v14H565M306.500 350v15" />
        <path d="M576 347.500h35M467 367.500h10M467 367.500l4-3M467 367.500l4 3M627 349.500h6M628 349.500l4-3M628 349.500l3 4" />
      </g>
      <g stroke="#999">
        <path d="M480.500 347.500h8v20h-8z" />
        <path d="M565.500 347.500h7v20h-7z" />
      </g>
      <path d="M488.500 357v10" stroke="#243" strokeWidth="1.500" />
      <g stroke={green}>
        <path d="M287.500 350.500H552" strokeDasharray="10 8.200" />
        <path d="M287.500 364.500H490" strokeDasharray="10 8.200" />
        <path d="M380 357.500h6" />
        <path d="M395 357.500H673" strokeDasharray="9 9.200" />
        <path d="M488.500 304V422.500" strokeDasharray="9.300 9" />
        <path d="M526.500 304V422.500" strokeDasharray="9.300 9" />
      </g>
      <path d="M565.500 307v84" stroke="#4a76c8" strokeDasharray="10 4 5 4" />
      <g fill="#fff" stroke="none">
        <rect x="449" y="258" width="16" height="216" />
        <rect x="610" y="238" width="17" height="222" />
      </g>
      <g fill="#111">
        <text x="343" y="309" fontSize="20">Exterior</text>
        <text x="343" y="437" fontSize="20">Interior</text>
        <text x="497" y="275" fontSize="15">EQ</text>
        <text x="535" y="275" fontSize="15">EQ</text>
        <text transform="translate(463 473) rotate(-90)" fontSize="15">Frame Projection Int. = 25.4 mm</text>
        <text transform="translate(624 459) rotate(-90)" fontSize="15">Frame Projection Ext. = 25.4 mm</text>
      </g>
      <g stroke="#222">
        <path d="M485 280.500h82M488.500 275v27M526.500 275v27M565.500 275v27" />
        <path d="M485.500 283.500l6-6M523.500 283.500l6-6M562.500 283.500l6-6" />
      </g>
      <g fill="#8fbbe8" stroke="#2862b8" strokeWidth=".8">
        {[488.5, 526.5, 565.5].map((x) => (
          <g key={x}>
            <circle cx={x} cy="290.500" r="1.300" />
            <circle cx={x} cy="300" r="1.300" />
          </g>
        ))}
        <circle cx="507.500" cy="278.500" r="1.300" />
        <circle cx="545.500" cy="278.500" r="1.300" />
        <circle cx="526.500" cy="396.500" r="1.300" />
        <circle cx="565.500" cy="396.500" r="1.300" />
        <circle cx="746.500" cy="396.500" r="1.300" />
      </g>
      <Lock x={507} />
      <Lock x={545} />
      <g stroke="#5b4ee6">
        <path d="M502 309.500h8M504 307.500l-2 2M502.500 312.500h8M510.500 312.500l-2 2" />
        <path d="M548.500 307v7M546.500 312l2 2M551.500 307v7M551.500 307l2 2" />
      </g>
      <g stroke={link}>
        <circle cx="565.500" cy="303.500" r="2.500" fill="#fff" />
        <circle cx="565.500" cy="421.500" r="2.500" />
      </g>
      <g stroke="#8fb0f2">
        <path d="M526 398.500h222" />
        <path d="M526.500 394v9" />
        <path d="M565.500 394v9" />
        <path d="M746.500 368v35" />
      </g>
      <path d="M524 401l5-5M563 401l5-5M744 401l5-5" stroke={ink} />
      <path d="M652.500 404.500v5M659.500 404.500v5M653 407.500h6" stroke={ink} />
      <g fill={ink}>
        <text x="522" y="253" fontSize="6">EQ</text>
        <text x="527" y="395" fontSize="8">400.0 mm</text>
        <text x="636" y="395" fontSize="8">1886.0 mm</text>
        <text x="556" y="418" fontSize="8" fill={link}>Right</text>
        <text x="463" y="305" fontSize="5" fontWeight="bold">3D</text>
        <text x="661" y="424" fontSize="5" fontWeight="bold">3D</text>
      </g>
    </svg>
  );
}

function NavigationBar() {
  return (
    <div className="absolute top-1 right-[2px] flex w-7 flex-col items-end">
      <div className="flex h-[6px] items-center gap-[2px]">
        <Svg w={7} h={6}>
          <path d="M.5 2.500h6v2h-6z" stroke="#555" />
        </Svg>
        <Svg w={7} h={6}>
          <path d="M.5 1.500h4v4h-4zM2 1V.5h4.500V4H5" stroke="#444" />
        </Svg>
        <Svg w={7} h={6}>
          <path d="M1 .5l5 5M6 .5l-5 5M.5.5v5M6.500.5v5" stroke="#555" />
        </Svg>
      </div>
      <div className="mt-1 flex h-[61px] w-[18px] flex-col items-center rounded-[3px] border border-[#aaa] bg-[#f4f4f4]">
        <div className="mr-px self-end">
          <Svg w={5} h={6}>
            <circle cx="2.500" cy="3" r="1.500" stroke="#999" />
          </Svg>
        </div>
        <Tool label="Steering wheel" className="mt-[3px]">
          <Svg w={14} h={14}>
            <circle cx="6" cy="6.500" r="5" stroke="#999" />
            <circle cx="6" cy="6.500" r="2" stroke="#999" />
            <path d="M10.500 1.500v5" stroke="#999" />
            <text x="6" y="13" fontSize="6" fill="#3a78bd" stroke="none">2D</text>
          </Svg>
        </Tool>
        <Svg w={5} h={5}>
          <path d="M1 1.500h3L2.500 3.500z" fill="#666" stroke="none" />
        </Svg>
        <div className="h-px w-[13px] bg-[#bbb]" />
        <Tool label="Zoom region" className="mt-1">
          <Svg w={10} h={10}>
            <path d="M1 1h6v6H1z" fill="#9cc894" stroke="#7aa872" />
            <circle cx="6.500" cy="6.500" r="2" fill="#fff" stroke="#888" />
            <path d="M8 8l2 2" stroke="#888" />
          </Svg>
        </Tool>
        <Svg w={5} h={6}>
          <path d="M1 3h3L2.500 5z" fill="#666" stroke="none" />
        </Svg>
        <div className="mt-[3px] mr-px self-end">
          <Svg w={5} h={5}>
            <circle cx="2.500" cy="2.500" r="1.500" stroke="#999" />
          </Svg>
        </div>
      </div>
    </div>
  );
}

function ViewBar() {
  return (
    <div className="flex h-[13px] shrink-0 items-center bg-[#f0f0f0]">
      <button className="ml-[19px] w-[42px] text-left text-[9px] leading-3 whitespace-pre text-[#222]">1 : 24</button>
      <div className="flex items-center gap-[3px]">
        <Tool label="Detail level" className="w-[13px]">
          <Svg w={9} h={8}>
            <path d="M.5 1h8v6h-8z" fill="#e4e7f0" />
          </Svg>
        </Tool>
        <Tool label="Visual style" className="w-[13px]">
          <Svg w={9} h={9}>
            <path d="M.5 3.500h6v4h-6zM.5 3.500l2-2h6l-2 2M8.500 1.500v4l-2 2" stroke="#333" />
          </Svg>
        </Tool>
        <Tool label="Sun path" className="w-[13px]">
          <Svg w={9} h={9}>
            <circle cx="3.500" cy="3.500" r="2" stroke="#bbb" />
            <path d="M4 5l4 3.500M8 4.500L4.500 8.500M.5.5L2 2" stroke="#aaa" />
          </Svg>
        </Tool>
        <Tool label="Shadows" className="w-[13px]">
          <Svg w={9} h={9}>
            <circle cx="4.500" cy="3" r="2" stroke="#bbb" />
            <path d="M5 5l3 3.500M8 5L5 8.500M1 7h3" stroke="#aaa" />
          </Svg>
        </Tool>
        <Tool label="Crop view" className="w-[13px]">
          <Svg w={9} h={9}>
            <path d="M2.500 0v6.500H9M0 2.500h6.500V7" stroke="#2c70b8" strokeWidth="1.500" />
            <path d="M5 5l3.500 3.500M8.500 5L5 8.500" stroke="#d33" strokeWidth="1.500" />
          </Svg>
        </Tool>
        <Tool label="Crop region" className="w-[13px]">
          <Svg w={9} h={9}>
            <path d="M2.500 0v6.500H9M0 2.500h6.500V8" stroke="#2c70b8" strokeWidth="1.500" />
            <circle cx="7" cy="3" r="1.500" stroke="#4994d8" />
          </Svg>
        </Tool>
        <Tool label="Temporary hide" className="w-[13px]">
          <Svg w={9} h={9}>
            <path d="M0 2.500l3 1 1 2.500 4-3M3 4c1-2 4-2 5 0L5.500 7z" stroke="#555" />
          </Svg>
        </Tool>
        <Tool label="Reveal hidden" className="w-[13px]">
          <Svg w={9} h={9}>
            <path d="M4.500 6V5a2 2 0 1 1 1 0v1M4 7.500h2" stroke="#aaa" />
          </Svg>
        </Tool>
        <Tool label="Constraints" className="w-[13px]">
          <Svg w={9} h={9}>
            <path d="M.5 1.500h7v4h-7zM4.500 4.500l4 4M8 4.500l-3 4" stroke="#aaa" />
          </Svg>
        </Tool>
        <Tool label="Preview visibility" className="w-[13px]">
          <Svg w={9} h={9}>
            <path d="M1 7.500v-4L3 1.500h5M3.500 4v4M6 4.500v4M3.500 6H8" stroke="#999" />
          </Svg>
        </Tool>
      </div>
      <button aria-label="Scroll left" className="ml-[6px]">
        <Chevron dir="left" />
      </button>
      <div className="flex h-full grow items-center">
        <div className="ml-[49%] h-[13px] w-[14px] bg-[#cbcbcb]" />
      </div>
      <button aria-label="Scroll right" className="mr-[14px]">
        <Chevron dir="right" />
      </button>
    </div>
  );
}

function StatusBar() {
  return (
    <footer className="flex h-[10px] shrink-0 items-start justify-between overflow-hidden border-t border-[#999] bg-linear-to-b from-[#e4e4e4] to-[#c8c8c8] pt-px pr-9">
      <p className="text-[9px] leading-[14px] whitespace-nowrap text-[#111]">Click to select, TAB for alternates, CTRL adds, SHIFT unselects</p>
      <div className="flex gap-1 pt-px">
        <Svg w={9} h={9}>
          <path d="M1 2l2 2 2-2 2 2 1-2M4.500 3v4" stroke="#cf9a1c" strokeWidth="1.500" />
        </Svg>
        <Svg w={9} h={9}>
          <path d="M1 5l3-4h5l-3 5zM1 7h5" stroke={blue} fill={pale} />
        </Svg>
        <Svg w={9} h={9}>
          <path d="M1 1.500h4l2 2H2zM2 5h4v3" stroke="#d96a1c" fill="#f6c08a" />
        </Svg>
        <Svg w={9} h={9}>
          <path d="M4 1H1v7h3" stroke={blue} />
          <path d="M4 1l4 4M8 1L4 5" stroke="#d33" strokeWidth="1.500" />
        </Svg>
        <Svg w={9} h={9}>
          <path d="M3 1v5M1 3h5M5 5l3 3" stroke="#333" />
        </Svg>
        <Svg w={14} h={9}>
          <path d="M1 1h8L6 5v4H4V5z" fill="#b7b9c0" />
          <path d="M13 4v4M11 7v1" stroke="#222" />
        </Svg>
      </div>
    </footer>
  );
}

export default function App() {
  return (
    <div className="flex h-screen w-full flex-col overflow-hidden bg-[#f0f0f0] font-['Lato','Open_Sans',sans-serif]">
      <TitleBar />
      <Tabs />
      <Ribbon />
      <div className="h-[21px] shrink-0 bg-[#d8e4d2] pl-[5px] text-[9px] leading-6 text-[#a3aaa0]">
        Modify | Reference Planes
      </div>
      <main className="flex min-h-0 grow">
        <aside className="flex w-[175px] shrink-0 flex-col gap-[3px]">
          <PropertiesPane />
          <ProjectBrowser />
        </aside>
        <div className="w-[3px] shrink-0 border-r border-[#777] bg-[#e8e8e8]" />
        <div className="relative flex min-w-0 grow flex-col border-t border-[#777] bg-white">
          <div className="flex min-h-0 grow">
            <div className="relative min-w-0 grow overflow-hidden">
              <PlanDrawing />
              <NavigationBar />
            </div>
            <div className="flex w-[10px] shrink-0 flex-col items-center bg-[#f0f0f0]">
              <button aria-label="Scroll up" className="flex h-[14px] items-center">
                <Chevron dir="up" />
              </button>
              <div className="grow" />
              <div className="h-[14px] w-[10px] bg-[#cbcbcb]" />
              <div className="grow" />
              <button aria-label="Scroll down" className="flex h-[14px] items-center">
                <Chevron dir="down" />
              </button>
            </div>
          </div>
          <ViewBar />
        </div>
      </main>
      <StatusBar />
    </div>
  );
}
